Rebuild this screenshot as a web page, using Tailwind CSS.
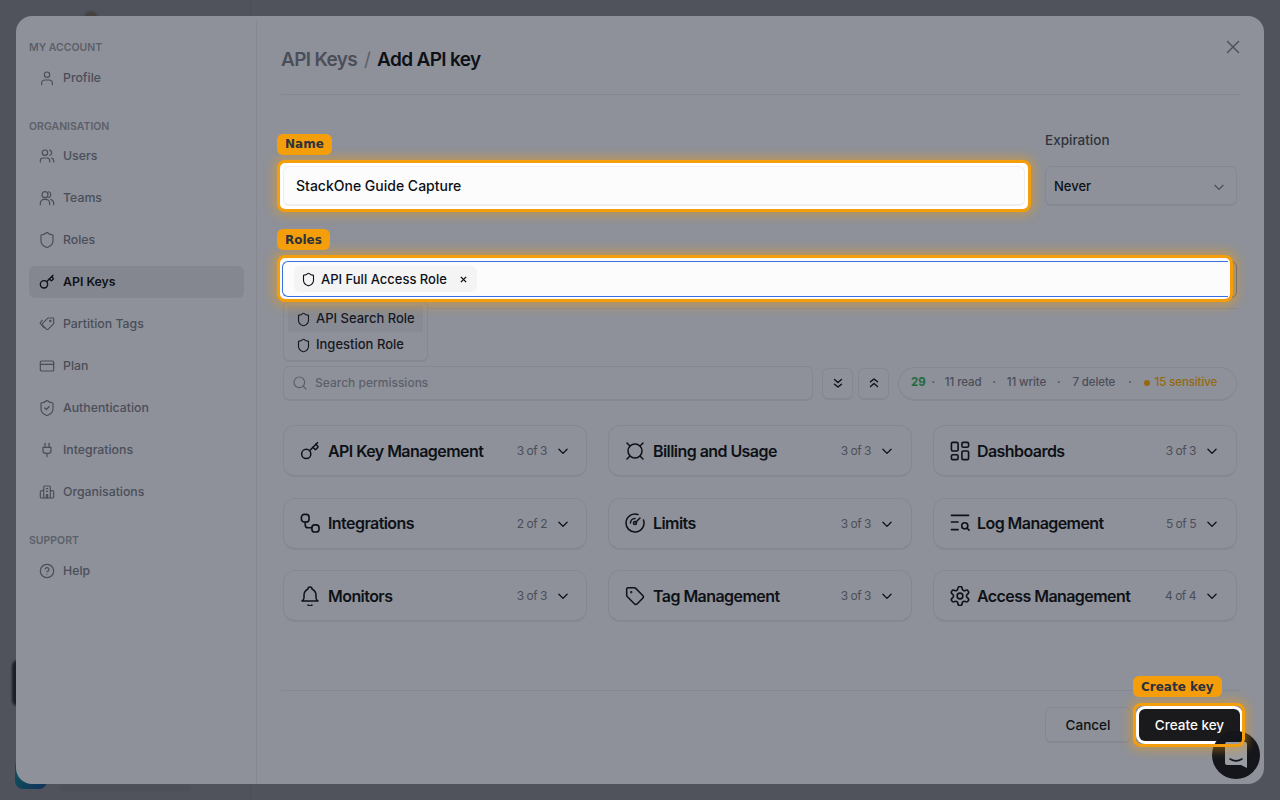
<!DOCTYPE html>
<html lang="en">

<head>
    <meta charset="UTF-8">
    <meta name="viewport" content="width=device-width, initial-scale=1.0">
    <title>Add API key</title>
    <script src="https://cdn.jsdelivr.net/npm/@tailwindcss/browser@4"></script>
</head>

<body class="relative w-[1280px] h-[800px] overflow-hidden bg-[#50535c] p-4 font-[Inter,sans-serif] text-[#0e1117]">
    <!-- page behind the overlay -->
    <div class="absolute left-[250px] top-0 w-px h-full bg-[#4b4e57]"></div>
    <div class="absolute left-[84px] top-[11px] w-[14px] h-[14px] rounded-full bg-[#45413e] blur-[1px]"></div>
    <div class="absolute left-[12px] top-[660px] w-[14px] h-[46px] rounded-md bg-[#1c1d29] blur-[1px]"></div>
    <div class="absolute left-[15px] top-[758px] w-[32px] h-[31px] rounded-lg bg-gradient-to-br from-[#0c5a58] to-[#12305c]"></div>
    <div class="absolute left-[60px] top-[785px] w-[130px] h-[6px] bg-[#4c4f58] blur-[1px]"></div>

    <div class="relative flex h-[768px] rounded-2xl bg-[#8e9199]">
        <!-- sidebar -->
        <aside class="w-[241px] mt-[5px] pt-[20px] pl-[13px] pr-[12px] border-r border-[#858891] shrink-0">
            <div class="h-[14px] flex items-center text-[10.5px] leading-none font-semibold text-[#5c5f6a]">MY ACCOUNT</div>
            <a class="mt-[7px] flex items-center gap-[8px] h-8 pl-[10px] text-[12.3px] font-medium text-[#4b4e59]">
                <svg class="w-4 h-4 shrink-0" viewBox="0 0 24 24" fill="none" stroke="currentColor" stroke-width="1.8" stroke-linecap="round" stroke-linejoin="round"><circle cx="12" cy="7" r="4"/><path d="M4 22v-2a5 5 0 0 1 5-5h6a5 5 0 0 1 5 5v2"/></svg>
                Profile
            </a>

            <div class="mt-[26px] h-[14px] flex items-center text-[10.5px] leading-none font-semibold text-[#5c5f6a]">ORGANISATION</div>
            <nav class="mt-[6px] flex flex-col gap-[10px] text-[12.3px] font-medium text-[#4b4e59]">
                <a class="flex items-center gap-[8px] h-8 pl-[10px]">
                    <svg class="w-4 h-4 shrink-0" viewBox="0 0 24 24" fill="none" stroke="currentColor" stroke-width="1.8" stroke-linecap="round" stroke-linejoin="round"><circle cx="9" cy="7" r="4"/><path d="M2 21v-2a4 4 0 0 1 4-4h6a4 4 0 0 1 4 4v2"/><path d="M16 3.13a4 4 0 0 1 0 7.75"/><path d="M22 21v-2a4 4 0 0 0-3-3.85"/></svg>
                    Users
                </a>
                <a class="flex items-center gap-[8px] h-8 pl-[10px]">
                    <svg class="w-4 h-4 shrink-0" viewBox="0 0 24 24" fill="none" stroke="currentColor" stroke-width="1.8" stroke-linecap="round" stroke-linejoin="round"><circle cx="9" cy="7" r="4.500"/><path d="M2 22v-2a6 6 0 0 1 6-6h2a6 6 0 0 1 6 6v2"/><path d="M14.500 2.700a4.500 4.500 0 0 1 0 8.600"/><path d="M22 22v-2a6 6 0 0 0-4.500-5.800"/></svg>
                    Teams
                </a>
                <a class="flex items-center gap-[8px] h-8 pl-[10px]">
                    <svg class="w-[18px] h-[18px] -mx-px shrink-0" viewBox="0 0 24 24" fill="none" stroke="currentColor" stroke-width="1.600" stroke-linecap="round" stroke-linejoin="round"><path d="M20 13c0 5-3.500 7.500-7.660 8.950a1 1 0 0 1-.67-.010C7.500 20.500 4 18 4 13V6a1 1 0 0 1 1-1c2 0 4.500-1.200 6.240-2.720a1.170 1.170 0 0 1 1.520 0C14.510 3.810 17 5 19 5a1 1 0 0 1 1 1z"/></svg>
                    Roles
                </a>
                <a class="flex items-center gap-[8px] h-8 pl-[10px] rounded-md bg-[#84878f] font-semibold text-[#0e1117]">
                    <svg class="w-4 h-4 shrink-0" viewBox="0 0 24 24" fill="none" stroke="currentColor" stroke-width="2" stroke-linecap="round" stroke-linejoin="round"><path d="m15.500 7.500 2.300 2.300a1 1 0 0 0 1.400 0l2.100-2.100a1 1 0 0 0 0-1.400L19 4"/><path d="m21 2-9.600 9.600"/><circle cx="7.500" cy="15.500" r="5.500"/></svg>
                    API Keys
                </a>
                <a class="flex items-center gap-[8px] h-8 pl-[10px]">
                    <svg class="w-4 h-4 shrink-0" viewBox="0 0 24 24" fill="none" stroke="currentColor" stroke-width="1.800" stroke-linecap="round" stroke-linejoin="round"><path d="M14.200 3H21a1 1 0 0 1 1 1v6.800a2 2 0 0 1-.6 1.400l-7.400 7.400a2 2 0 0 1-2.800 0l-5.800-5.800a2 2 0 0 1 0-2.800l7.400-7.400a2 2 0 0 1 1.400-.6z"/><path d="M5 6.500 2.600 8.900a2 2 0 0 0 0 2.800l5.200 6"/><circle cx="17" cy="7.500" r="1"/></svg>
                    Partition Tags
                </a>
                <a class="flex items-center gap-[8px] h-8 pl-[10px]">
                    <svg class="w-4 h-4 shrink-0" viewBox="0 0 24 24" fill="none" stroke="currentColor" stroke-width="1.800" stroke-linecap="round" stroke-linejoin="round"><rect x="2" y="4.500" width="20" height="15" rx="2"/><path d="M2 9.500h20"/></svg>
                    Plan
                </a>
                <a class="flex items-center gap-[8px] h-8 pl-[10px]">
                    <svg class="w-[18px] h-[18px] -mx-px shrink-0" viewBox="0 0 24 24" fill="none" stroke="currentColor" stroke-width="1.600" stroke-linecap="round" stroke-linejoin="round"><path d="M20 13c0 5-3.500 7.500-7.660 8.950a1 1 0 0 1-.67-.010C7.500 20.500 4 18 4 13V6a1 1 0 0 1 1-1c2 0 4.500-1.200 6.240-2.720a1.170 1.170 0 0 1 1.520 0C14.510 3.810 17 5 19 5a1 1 0 0 1 1 1z"/><path d="m9 12 2 2 4-4"/></svg>
                    Authentication
                </a>
                <a class="flex items-center gap-[8px] h-8 pl-[10px]">
                    <svg class="w-4 h-4 shrink-0" viewBox="0 0 24 24" fill="none" stroke="currentColor" stroke-width="1.800" stroke-linecap="round" stroke-linejoin="round"><path d="M12 22v-5"/><path d="M9 8V2"/><path d="M15 8V2"/><path d="M18 8v5a4 4 0 0 1-4 4h-4a4 4 0 0 1-4-4V8Z"/></svg>
                    Integrations
                </a>
                <a class="flex items-center gap-[8px] h-8 pl-[10px]">
                    <svg class="w-4 h-4 shrink-0" viewBox="0 0 24 24" fill="none" stroke="currentColor" stroke-width="1.800" stroke-linecap="round" stroke-linejoin="round"><path d="M7 21V5a2 2 0 0 1 2-2h6a2 2 0 0 1 2 2v16"/><path d="M7 10H4a2 2 0 0 0-2 2v7a2 2 0 0 0 2 2h16a2 2 0 0 0 2-2v-7a2 2 0 0 0-2-2h-3"/><path d="M11 7h2"/><path d="M11 11h2"/><path d="M11 21v-5h2v5"/></svg>
                    Organisations
                </a>
            </nav>

            <div class="mt-[26px] h-[14px] flex items-center text-[10.5px] leading-none font-semibold text-[#5c5f6a]">SUPPORT</div>
            <a class="mt-[7px] flex items-center gap-[8px] h-8 pl-[10px] text-[12.3px] font-medium text-[#4b4e59]">
                <svg class="w-4 h-4 shrink-0" viewBox="0 0 24 24" fill="none" stroke="currentColor" stroke-width="1.800" stroke-linecap="round" stroke-linejoin="round"><circle cx="12" cy="12" r="10"/><path d="M9.090 9a3 3 0 0 1 5.830 1c0 2-3 3-3 3"/><path d="M12 17h.01"/></svg>
                Help
            </a>
        </aside>

        <!-- main -->
        <main class="flex-1 px-6 flex flex-col min-w-0">
            <header class="h-[79px] pt-[27px] border-b border-[#858891] shrink-0">
                <div class="h-[34px] flex items-center gap-[7px] text-[19px] font-semibold tracking-[-0.035em]">
                    <span class="text-[#4b4e59]">API Keys</span>
                    <span class="font-normal text-[#5c5f6a]">/</span>
                    <span>Add API key</span>
                </div>
            </header>

            <button class="absolute right-[24px] top-[24px] text-[#4b4e59]">
                <svg class="w-[14px] h-[14px]" viewBox="0 0 14 14" fill="none" stroke="currentColor" stroke-width="1.400" stroke-linecap="round"><path d="M1.500 1.500l11 11M12.500 1.500l-11 11"/></svg>
            </button>

            <form class="pl-[2px] pr-[3px] pt-[35px] flex-1">
                <div class="flex gap-5">
                    <div class="w-[742px] pt-9">
                        <div class="relative -m-[6px] p-[3px] rounded-lg border-[3px] border-[#f59e0b] bg-white shadow-[0_0_10px_4px_rgba(245,158,11,0.4)]">
                            <div class="h-10 rounded-md bg-[#fcfcfc] border border-[#eeeeef] border-b-2 flex items-center pl-[12px] text-sm font-medium">StackOne Guide Capture</div>
                            <span class="absolute -left-[3px] -top-[29px] h-[21px] px-2 pb-px rounded-md bg-[#f59e0b] flex items-center text-xs font-bold font-['DejaVu_Sans',sans-serif] text-[#2d323c]">Name</span>
                        </div>
                    </div>
                    <div class="w-[192px]">
                        <div class="h-5 mb-4 text-[13.5px] font-medium flex items-center text-[#30333c]">Expiration</div>
                        <div class="h-10 pt-[2px] rounded-md border border-[#858891] border-b-2 flex items-center justify-between pl-[8px] pr-[10px] text-[13px] font-medium">
                            Never
                            <svg class="w-[14px] h-[14px] text-[#4b4e59]" viewBox="0 0 24 24" fill="none" stroke="currentColor" stroke-width="2" stroke-linecap="round" stroke-linejoin="round"><path d="m5 9 7 7 7-7"/></svg>
                        </div>
                    </div>
                </div>

                <!-- roles -->
                <div class="relative mt-[55px] pb-[10px] border-b border-[#858891]">
                    <div class="relative h-[37px] rounded-md border border-[#4f5f88]">
                        <div class="absolute -left-[7px] -top-[7px] w-[956px] h-[47px] rounded-lg border-[3px] border-[#f59e0b] bg-[#fcfcfc] px-[2px] pt-[3px] pb-[2px] z-10 shadow-[0_0_10px_5px_rgba(245,158,11,0.4)]">
                            <div class="h-full rounded-l-md border-y border-l border-[#3b6fe0] flex items-center pl-[11px]">
                                <span class="h-[26px] w-[183px] pt-px rounded-md bg-[#f4f4f5] flex items-center pl-[7px] text-[13px] font-medium">
                                    <svg class="w-[15px] h-[15px] shrink-0 mr-[5px]" viewBox="0 0 24 24" fill="none" stroke="currentColor" stroke-width="1.800" stroke-linecap="round" stroke-linejoin="round"><path d="M20 13c0 5-3.500 7.500-7.660 8.950a1 1 0 0 1-.67-.010C7.500 20.500 4 18 4 13V6a1 1 0 0 1 1-1c2 0 4.500-1.200 6.240-2.720a1.170 1.170 0 0 1 1.520 0C14.510 3.810 17 5 19 5a1 1 0 0 1 1 1z"/></svg>
                                    API Full Access Role
                                    <svg class="ml-[13px] w-[7px] h-[7px]" viewBox="0 0 8 8" fill="none" stroke="currentColor" stroke-width="1.600"><path d="M1 1l6 6M7 1 1 7"/></svg>
                                </span>
                            </div>
                        </div>
                        <span class="absolute -left-[7px] -top-[33px] h-[21px] px-2 rounded-md bg-[#f59e0b] flex items-center text-xs font-bold font-['DejaVu_Sans',sans-serif] text-[#2d323c] z-10">Roles</span>
                    </div>
                    <!-- dropdown -->
                    <div class="absolute left-0 top-[40px] w-[145px] h-[61px] rounded-md bg-[#8e9199] border border-[#858891] border-b-2 pt-[4px] px-[4px] text-[13px] font-medium">
                        <div class="h-[26px] flex items-center gap-[5px] pl-[8px] bg-[#888b93] text-[#16181f]">
                            <svg class="w-[15px] h-[15px] shrink-0" viewBox="0 0 24 24" fill="none" stroke="currentColor" stroke-width="1.800" stroke-linecap="round" stroke-linejoin="round"><path d="M20 13c0 5-3.500 7.500-7.660 8.950a1 1 0 0 1-.67-.010C7.500 20.500 4 18 4 13V6a1 1 0 0 1 1-1c2 0 4.500-1.200 6.240-2.720a1.170 1.170 0 0 1 1.520 0C14.510 3.810 17 5 19 5a1 1 0 0 1 1 1z"/></svg>
                            API Search Role
                        </div>
                        <div class="h-[26px] flex items-center gap-[5px] pl-[8px] text-[#16181f]">
                            <svg class="w-[15px] h-[15px] shrink-0" viewBox="0 0 24 24" fill="none" stroke="currentColor" stroke-width="1.800" stroke-linecap="round" stroke-linejoin="round"><path d="M20 13c0 5-3.500 7.500-7.660 8.950a1 1 0 0 1-.67-.010C7.500 20.500 4 18 4 13V6a1 1 0 0 1 1-1c2 0 4.500-1.200 6.240-2.720a1.170 1.170 0 0 1 1.520 0C14.510 3.810 17 5 19 5a1 1 0 0 1 1 1z"/></svg>
                            Ingestion Role
                        </div>
                    </div>
                </div>

                <!-- search row -->
                <div class="mt-[57px] flex items-center h-[35px]">
                    <div class="w-[530px] h-[35px] rounded-md border border-[#858891] border-b-2 flex items-center pl-[8px] gap-[7px] text-xs font-medium text-[#5c5f6a]">
                        <svg class="w-4 h-4 shrink-0" viewBox="0 0 24 24" fill="none" stroke="currentColor" stroke-width="1.800" stroke-linecap="round" stroke-linejoin="round"><circle cx="11" cy="11" r="8"/><path d="m21 21-4.300-4.300"/></svg>
                        Search permissions
                    </div>
                    <button type="button" class="ml-[9px] w-[31px] h-[32px] rounded-md border border-[#858891] border-b-2 flex items-center justify-center">
                        <svg class="w-[14px] h-[14px]" viewBox="0 0 24 24" fill="none" stroke="currentColor" stroke-width="2.400" stroke-linecap="round" stroke-linejoin="round"><path d="m6 6 6 5 6-5"/><path d="m6 14 6 5 6-5"/></svg>
                    </button>
                    <button type="button" class="ml-[5px] w-[31px] h-[32px] rounded-md border border-[#858891] border-b-2 flex items-center justify-center">
                        <svg class="w-[14px] h-[14px]" viewBox="0 0 24 24" fill="none" stroke="currentColor" stroke-width="2.400" stroke-linecap="round" stroke-linejoin="round"><path d="m6 10 6-5 6 5"/><path d="m6 18 6-5 6 5"/></svg>
                    </button>
                    <div class="ml-[9px] flex-1 h-[34px] rounded-full border border-[#858891] border-b-2 flex items-center pl-[12px] text-[11.5px] font-medium tracking-[-0.01em] text-[#4b4e59] whitespace-nowrap">
                        <span class="font-bold text-[#1e6b3e]">29</span>
                        <span class="ml-[6px]">·</span>
                        <span class="ml-[10px]">11 read</span>
                        <span class="ml-[11px]">·</span>
                        <span class="ml-[11px]">11 write</span>
                        <span class="ml-[11px]">·</span>
                        <span class="ml-[12px]">7 delete</span>
                        <span class="ml-[13px]">·</span>
                        <span class="ml-[12px] w-[6px] h-[6px] rounded-full bg-[#95690f]"></span>
                        <span class="ml-[5px] text-[#95690f]">15 sensitive</span>
                    </div>
                </div>

                <!-- permission groups -->
                <div class="mt-6 grid grid-cols-3 gap-x-[21px] gap-y-[20.5px]">
                    <div class="h-[52px] rounded-xl border border-[#858891] border-b-2 flex items-center pl-[16px] pr-[16px]">
                        <svg class="w-5 h-5 shrink-0" viewBox="0 0 24 24" fill="none" stroke="currentColor" stroke-width="1.800" stroke-linecap="round" stroke-linejoin="round"><path d="m15.500 7.500 2.300 2.300a1 1 0 0 0 1.400 0l2.100-2.100a1 1 0 0 0 0-1.400L19 4"/><path d="m21 2-9.600 9.600"/><circle cx="7.500" cy="15.500" r="5.500"/></svg>
                        <span class="ml-2 flex-1 text-base font-semibold tracking-[-0.035em]">API Key Management</span>
                        <span class="mt-px text-xs tracking-[-0.04em] text-[#4b4e59]">3 of 3</span>
                        <svg class="mt-px ml-[9px] w-[14px] h-[14px]" viewBox="0 0 24 24" fill="none" stroke="currentColor" stroke-width="2.200" stroke-linecap="round" stroke-linejoin="round"><path d="m5 9 7 7 7-7"/></svg>
                    </div>
                    <div class="h-[52px] rounded-xl border border-[#858891] border-b-2 flex items-center pl-[16px] pr-[17px]">
                        <svg class="w-5 h-5 shrink-0" viewBox="2 2 20 20" fill="none" stroke="currentColor" stroke-width="1.500" stroke-linecap="round" stroke-linejoin="round"><circle cx="12" cy="12" r="7"/><path d="m4 4 3 3"/><path d="m20 4-3 3"/><path d="m4 20 3-3"/><path d="m20 20-3-3"/></svg>
                        <span class="ml-2 flex-1 text-base font-semibold tracking-[-0.035em]">Billing and Usage</span>
                        <span class="mt-px text-xs tracking-[-0.04em] text-[#4b4e59]">3 of 3</span>
                        <svg class="mt-px ml-[9px] w-[14px] h-[14px]" viewBox="0 0 24 24" fill="none" stroke="currentColor" stroke-width="2.200" stroke-linecap="round" stroke-linejoin="round"><path d="m5 9 7 7 7-7"/></svg>
                    </div>
                    <div class="h-[52px] rounded-xl border border-[#858891] border-b-2 flex items-center pl-[16px] pr-[17px]">
                        <svg class="w-5 h-5 shrink-0" viewBox="1.500 1.500 21 21" fill="none" stroke="currentColor" stroke-width="1.700" stroke-linecap="round" stroke-linejoin="round"><rect x="3" y="3" width="7" height="9" rx="1.500"/><rect x="14" y="3" width="7" height="5" rx="1.500"/><rect x="14" y="12" width="7" height="9" rx="1.500"/><rect x="3" y="16" width="7" height="5" rx="1.500"/></svg>
                        <span class="ml-[7px] flex-1 text-base font-semibold tracking-[-0.035em]">Dashboards</span>
                        <span class="mt-px text-xs tracking-[-0.04em] text-[#4b4e59]">3 of 3</span>
                        <svg class="mt-px ml-[9px] w-[14px] h-[14px]" viewBox="0 0 24 24" fill="none" stroke="currentColor" stroke-width="2.200" stroke-linecap="round" stroke-linejoin="round"><path d="m5 9 7 7 7-7"/></svg>
                    </div>

                    <div class="h-[52px] rounded-xl border border-[#858891] border-b-2 flex items-center pl-[16px] pr-[16px]">
                        <svg class="w-5 h-5 shrink-0" viewBox="1.500 1.500 21 21" fill="none" stroke="currentColor" stroke-width="1.700" stroke-linecap="round" stroke-linejoin="round"><rect x="3" y="3" width="8" height="8" rx="3"/><rect x="14" y="14" width="7.500" height="7.500" rx="3"/><path d="M7 11v3a3 3 0 0 0 3 3h4"/></svg>
                        <span class="ml-2 flex-1 text-base font-semibold tracking-[-0.035em]">Integrations</span>
                        <span class="mt-px text-xs tracking-[-0.04em] text-[#4b4e59]">2 of 2</span>
                        <svg class="mt-px ml-[9px] w-[14px] h-[14px]" viewBox="0 0 24 24" fill="none" stroke="currentColor" stroke-width="2.200" stroke-linecap="round" stroke-linejoin="round"><path d="m5 9 7 7 7-7"/></svg>
                    </div>
                    <div class="h-[52px] rounded-xl border border-[#858891] border-b-2 flex items-center pl-[16px] pr-[17px]">
                        <svg class="w-5 h-5 shrink-0" viewBox="2 2 20 20" fill="none" stroke="currentColor" stroke-width="1.500" stroke-linecap="round" stroke-linejoin="round"><path d="M15 3.500A9 9 0 1 0 20.500 9"/><circle cx="12" cy="12" r="1.500"/><path d="M13 11 17 7"/><path d="M7.500 12a4.500 4.500 0 0 1 4.500-4.500"/></svg>
                        <span class="ml-2 flex-1 text-base font-semibold tracking-[-0.035em]">Limits</span>
                        <span class="mt-px text-xs tracking-[-0.04em] text-[#4b4e59]">3 of 3</span>
                        <svg class="mt-px ml-[9px] w-[14px] h-[14px]" viewBox="0 0 24 24" fill="none" stroke="currentColor" stroke-width="2.200" stroke-linecap="round" stroke-linejoin="round"><path d="m5 9 7 7 7-7"/></svg>
                    </div>
                    <div class="h-[52px] rounded-xl border border-[#858891] border-b-2 flex items-center pl-[16px] pr-[17px]">
                        <svg class="w-5 h-5 shrink-0" viewBox="1.500 1.500 21 21" fill="none" stroke="currentColor" stroke-width="1.700" stroke-linecap="round" stroke-linejoin="round"><path d="M3 4h18"/><path d="M3 11h7"/><path d="M3 19h7"/><circle cx="17" cy="15" r="3.200"/><path d="m19.500 17.500 2 2"/></svg>
                        <span class="ml-[7px] flex-1 text-base font-semibold tracking-[-0.035em]">Log Management</span>
                        <span class="mt-px text-xs tracking-[-0.04em] text-[#4b4e59]">5 of 5</span>
                        <svg class="mt-px ml-[9px] w-[14px] h-[14px]" viewBox="0 0 24 24" fill="none" stroke="currentColor" stroke-width="2.200" stroke-linecap="round" stroke-linejoin="round"><path d="m5 9 7 7 7-7"/></svg>
                    </div>

                    <div class="h-[52px] rounded-xl border border-[#858891] border-b-2 flex items-center pl-[16px] pr-[16px]">
                        <svg class="w-5 h-5 shrink-0" viewBox="3 2 18 20" fill="none" stroke="currentColor" stroke-width="1.500" stroke-linecap="round" stroke-linejoin="round"><path d="M10 5a2 2 0 1 1 4 0a7 7 0 0 1 4 6v3a4 4 0 0 0 2 3h-16a4 4 0 0 0 2-3v-3a7 7 0 0 1 4-6"/><path d="M10 21a2.500 2.500 0 0 0 4 0"/></svg>
                        <span class="ml-2 flex-1 text-base font-semibold tracking-[-0.035em]">Monitors</span>
                        <span class="mt-px text-xs tracking-[-0.04em] text-[#4b4e59]">3 of 3</span>
                        <svg class="mt-px ml-[9px] w-[14px] h-[14px]" viewBox="0 0 24 24" fill="none" stroke="currentColor" stroke-width="2.200" stroke-linecap="round" stroke-linejoin="round"><path d="m5 9 7 7 7-7"/></svg>
                    </div>
                    <div class="h-[52px] rounded-xl border border-[#858891] border-b-2 flex items-center pl-[16px] pr-[17px]">
                        <svg class="w-5 h-5 shrink-0" viewBox="0 0 24 24" fill="none" stroke="currentColor" stroke-width="1.800" stroke-linecap="round" stroke-linejoin="round"><path d="M12.586 2.586A2 2 0 0 0 11.172 2H4a2 2 0 0 0-2 2v7.172a2 2 0 0 0 .586 1.414l8.704 8.704a2.426 2.426 0 0 0 3.420 0l6.580-6.580a2.426 2.426 0 0 0 0-3.420z"/><circle cx="7.500" cy="7.500" r=".5"/></svg>
                        <span class="ml-2 flex-1 text-base font-semibold tracking-[-0.035em]">Tag Management</span>
                        <span class="mt-px text-xs tracking-[-0.04em] text-[#4b4e59]">3 of 3</span>
                        <svg class="mt-px ml-[9px] w-[14px] h-[14px]" viewBox="0 0 24 24" fill="none" stroke="currentColor" stroke-width="2.200" stroke-linecap="round" stroke-linejoin="round"><path d="m5 9 7 7 7-7"/></svg>
                    </div>
                    <div class="h-[52px] rounded-xl border border-[#858891] border-b-2 flex items-center pl-[16px] pr-[17px]">
                        <svg class="w-5 h-5 shrink-0" viewBox="1.500 1.500 21 21" fill="none" stroke="currentColor" stroke-width="1.700" stroke-linecap="round" stroke-linejoin="round"><path d="M12.220 2h-.44a2 2 0 0 0-2 2v.18a2 2 0 0 1-1 1.730l-.43.25a2 2 0 0 1-2 0l-.15-.08a2 2 0 0 0-2.730.73l-.22.38a2 2 0 0 0 .73 2.730l.15.1a2 2 0 0 1 1 1.720v.51a2 2 0 0 1-1 1.740l-.15.09a2 2 0 0 0-.73 2.730l.22.38a2 2 0 0 0 2.730.73l.15-.08a2 2 0 0 1 2 0l.43.25a2 2 0 0 1 1 1.730V20a2 2 0 0 0 2 2h.44a2 2 0 0 0 2-2v-.18a2 2 0 0 1 1-1.730l.43-.25a2 2 0 0 1 2 0l.15.08a2 2 0 0 0 2.730-.73l.22-.39a2 2 0 0 0-.73-2.730l-.15-.08a2 2 0 0 1-1-1.740v-.5a2 2 0 0 1 1-1.740l.15-.09a2 2 0 0 0 .73-2.730l-.22-.38a2 2 0 0 0-2.730-.73l-.15.08a2 2 0 0 1-2 0l-.43-.25a2 2 0 0 1-1-1.730V4a2 2 0 0 0-2-2z"/><circle cx="12" cy="12" r="3"/></svg>
                        <span class="ml-[7px] flex-1 text-base font-semibold tracking-[-0.035em]">Access Management</span>
                        <span class="mt-px text-xs tracking-[-0.04em] text-[#4b4e59]">4 of 4</span>
                        <svg class="mt-px ml-[9px] w-[14px] h-[14px]" viewBox="0 0 24 24" fill="none" stroke="currentColor" stroke-width="2.200" stroke-linecap="round" stroke-linejoin="round"><path d="m5 9 7 7 7-7"/></svg>
                    </div>
                </div>
            </form>

            <footer class="h-[94px] border-t border-[#858891] shrink-0 flex justify-end items-start pt-[16px] gap-2">
                <button class="w-[86px] h-9 pt-px rounded-md border border-[#858891] border-b-2 text-[13.5px] font-medium">Cancel</button>
                <div class="relative mt-[2px]">
                    <button class="w-[101px] h-[32px] pt-px rounded-md bg-[#1a1a1c] text-[13.5px] font-medium text-[#fafafa] shadow-[0_0_0_3px_#fff]">Create key</button>
                    <span class="absolute -left-[6px] -top-[33px] h-[21px] px-2 rounded-md bg-[#f59e0b] flex items-center text-xs font-bold font-['DejaVu_Sans',sans-serif] text-[#2d323c] whitespace-nowrap">Create key</span>
                    <div class="absolute -left-[6px] -top-[6px] -right-[5px] -bottom-[6px] rounded-lg border-[3px] border-[#f59e0b] z-30 shadow-[0_0_10px_4px_rgba(245,158,11,0.4)]"></div>
                </div>
            </footer>
        </main>

        <!-- chat launcher -->
        <div class="absolute right-[4px] bottom-[5px] w-12 h-12 rounded-full bg-[#14161c] z-20 flex items-center justify-center">
            <svg class="w-[22px] h-[26px]" viewBox="0 0 22 26" fill="#9a9ca3"><path d="M2 0h18a2 2 0 0 1 2 2v24l-6-3H2a2 2 0 0 1-2-2V2a2 2 0 0 1 2-2z"/><path d="M5 17c4 2.500 8 2.500 12 0" fill="none" stroke="#14161c" stroke-width="1.500" stroke-linecap="round"/></svg>
        </div>
    </div>
</body>

</html>
